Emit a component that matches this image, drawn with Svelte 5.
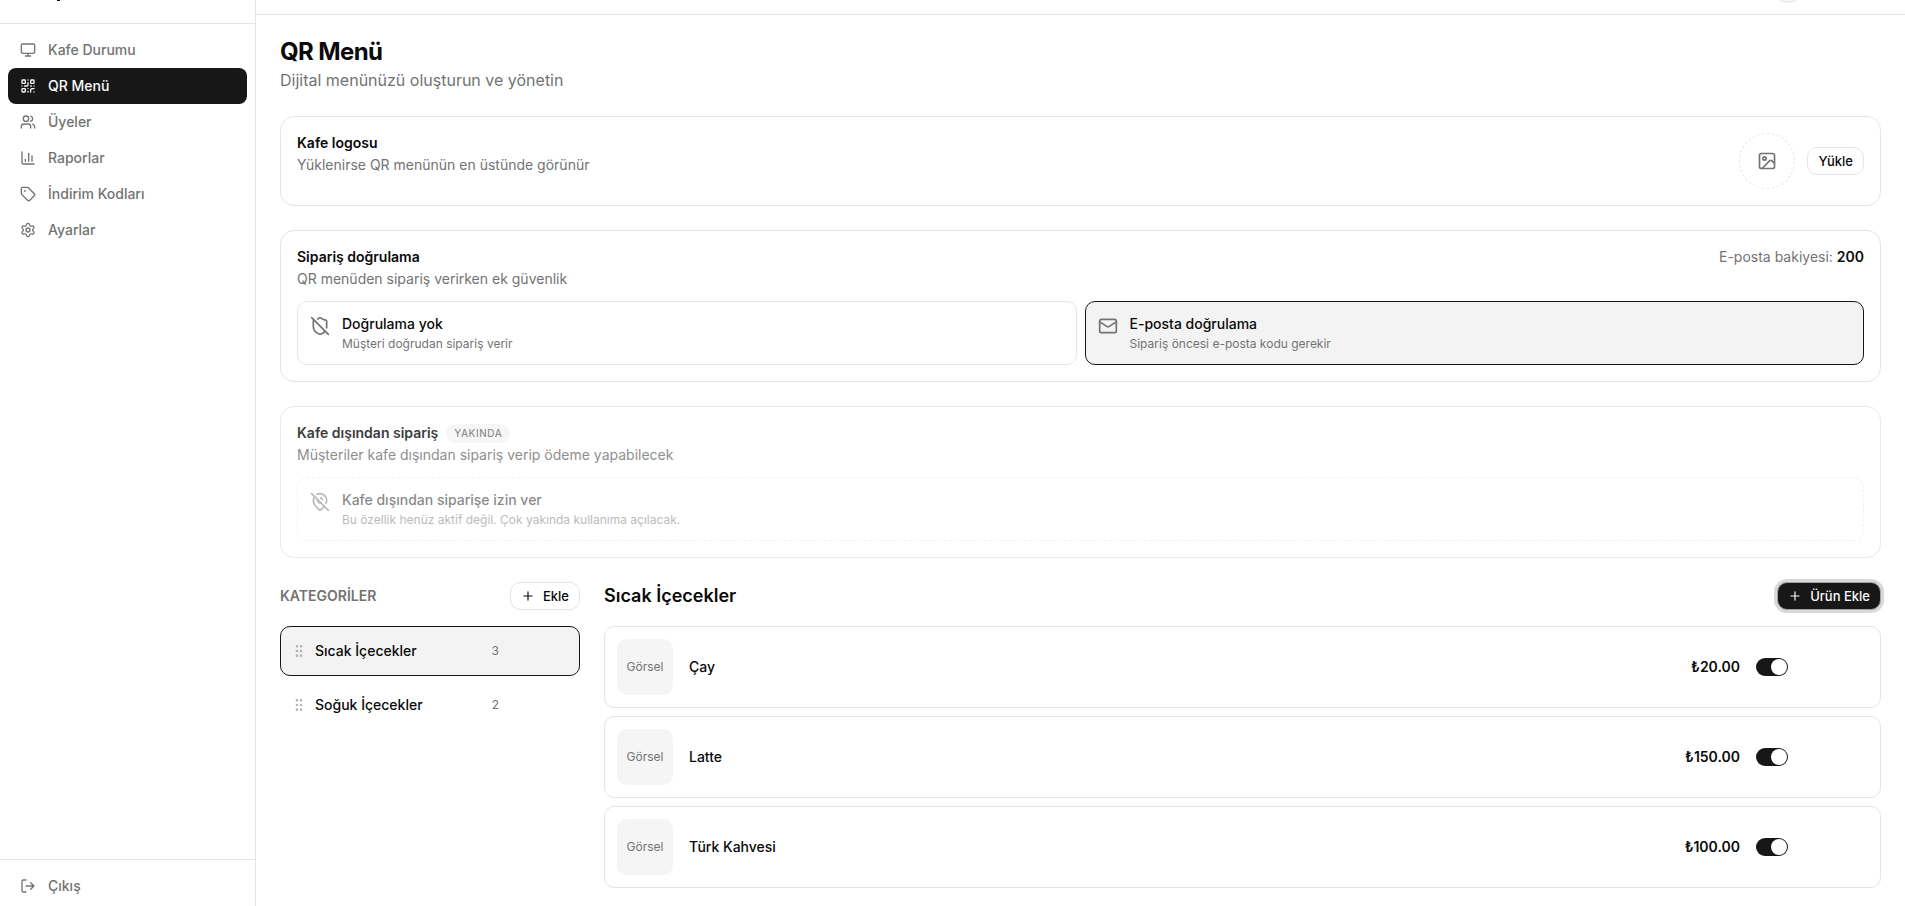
<script lang="ts">
	type Product = { name: string; price: string; active: boolean };
	type Category = { id: number; name: string; count: number };

	const nav = [
		{ label: "Kafe Durumu", icon: "monitor" },
		{ label: "QR Menü", icon: "qr" },
		{ label: "Üyeler", icon: "users" },
		{ label: "Raporlar", icon: "chart" },
		{ label: "İndirim Kodları", icon: "tag" },
		{ label: "Ayarlar", icon: "settings" },
	];

	const options = [
		{
			id: "none",
			icon: "shieldOff",
			title: "Doğrulama yok",
			text: "Müşteri doğrudan sipariş verir",
		},
		{
			id: "email",
			icon: "mail",
			title: "E-posta doğrulama",
			text: "Sipariş öncesi e-posta kodu gerekir",
		},
	];

	const categories: Category[] = [
		{ id: 1, name: "Sıcak İçecekler", count: 3 },
		{ id: 2, name: "Soğuk İçecekler", count: 2 },
	];

	let products: Product[] = $state([
		{ name: "Çay", price: "20.00", active: true },
		{ name: "Latte", price: "150.00", active: true },
		{ name: "Türk Kahvesi", price: "100.00", active: true },
	]);

	let activePage = $state("QR Menü");
	let verification = $state("email");
	let selectedId = $state(1);
	let selected = $derived(categories.find((c) => c.id === selectedId) ?? categories[0]);
</script>

{#snippet icon(name: string, size: number)}
	<svg
		width={size}
		height={size}
		viewBox="0 0 24 24"
		fill="none"
		stroke="currentColor"
		stroke-width="2"
		stroke-linecap="round"
		stroke-linejoin="round"
		aria-hidden="true"
	>
		{#if name === "monitor"}
			<rect width="20" height="14" x="2" y="3" rx="2" />
			<path d="M8 21h8M12 17v4" />
		{:else if name === "qr"}
			<rect width="5" height="5" x="3" y="3" rx="1" />
			<rect width="5" height="5" x="16" y="3" rx="1" />
			<rect width="5" height="5" x="3" y="16" rx="1" />
			<path d="M21 16h-3a2 2 0 0 0-2 2v3M21 21v.01M12 7v3a2 2 0 0 1-2 2H7M3 12h.01M12 3h.01M12 16v.01M16 12h1M21 12v.01M12 21v-1" />
		{:else if name === "users"}
			<path d="M16 21v-2a4 4 0 0 0-4-4H6a4 4 0 0 0-4 4v2" />
			<circle cx="9" cy="7" r="4" />
			<path d="M22 21v-2a4 4 0 0 0-3-3.87M16 3.13a4 4 0 0 1 0 7.75" />
		{:else if name === "chart"}
			<path d="M3 3v16a2 2 0 0 0 2 2h16M18 17V9M13 17V5M8 17v-3" />
		{:else if name === "tag"}
			<path d="M12.586 2.586A2 2 0 0 0 11.172 2H4a2 2 0 0 0-2 2v7.172a2 2 0 0 0 .586 1.414l8.704 8.704a2.426 2.426 0 0 0 3.42 0l6.58-6.58a2.426 2.426 0 0 0 0-3.42z" />
			<circle cx="7.5" cy="7.5" r=".5" fill="currentColor" />
		{:else if name === "settings"}
			<path d="M9.671 4.136a2.34 2.34 0 0 1 4.659 0 2.34 2.34 0 0 0 3.319 1.915 2.34 2.34 0 0 1 2.33 4.033 2.34 2.34 0 0 0 0 3.831 2.34 2.34 0 0 1-2.33 4.033 2.34 2.34 0 0 0-3.319 1.915 2.34 2.34 0 0 1-4.659 0 2.34 2.34 0 0 0-3.32-1.915 2.34 2.34 0 0 1-2.33-4.033 2.34 2.34 0 0 0 0-3.831A2.34 2.34 0 0 1 6.35 6.051a2.34 2.34 0 0 0 3.319-1.915" />
			<circle cx="12" cy="12" r="3" />
		{:else if name === "logout"}
			<path d="m16 17 5-5-5-5M21 12H9M9 21H5a2 2 0 0 1-2-2V5a2 2 0 0 1 2-2h4" />
		{:else if name === "image"}
			<rect width="18" height="18" x="3" y="3" rx="2" />
			<circle cx="9" cy="9" r="2" />
			<path d="m21 15-3.086-3.086a2 2 0 0 0-2.828 0L6 21" />
		{:else if name === "shieldOff"}
			<path d="m2 2 20 20" />
			<path d="M5 5a1 1 0 0 0-1 1v7c0 5 3.5 7.5 7.67 8.94a1 1 0 0 0 .67.01c2.35-.82 4.48-1.97 5.9-3.71" />
			<path d="M9.309 3.652A12.252 12.252 0 0 0 11.24 2.28a1.17 1.17 0 0 1 1.52 0C14.51 3.81 17 5 19 5a1 1 0 0 1 1 1v7a9.784 9.784 0 0 1-.08 1.264" />
		{:else if name === "mail"}
			<path d="m22 7-8.991 5.727a2 2 0 0 1-2.009 0L2 7" />
			<rect width="20" height="16" x="2" y="4" rx="2" />
		{:else if name === "pinOff"}
			<path d="M12.75 7.09a3 3 0 0 1 2.16 2.16" />
			<path d="M17.072 17.072c-1.634 2.17-3.527 3.912-4.471 4.727a1 1 0 0 1-1.202 0C9.539 20.193 4 14.993 4 10a8 8 0 0 1 1.432-4.568" />
			<path d="m2 2 20 20" />
			<path d="M8.475 2.818A8 8 0 0 1 20 10c0 1.183-.31 2.377-.81 3.533" />
			<path d="M9.13 9.13a3 3 0 0 0 3.74 3.74" />
		{:else if name === "plus"}
			<path d="M5 12h14M12 5v14" />
		{:else if name === "grip"}
			<circle cx="9" cy="12" r="1" />
			<circle cx="9" cy="5" r="1" />
			<circle cx="9" cy="19" r="1" />
			<circle cx="15" cy="12" r="1" />
			<circle cx="15" cy="5" r="1" />
			<circle cx="15" cy="19" r="1" />
		{/if}
	</svg>
{/snippet}

<div class="layout">
	<aside class="sidebar">
		<div class="brand"><span class="brand-mark"></span></div>
		<nav>
			{#each nav as item}
				<a
					href="#{item.icon}"
					class="nav-item"
					class:active={activePage === item.label}
					onclick={() => (activePage = item.label)}
				>
					{@render icon(item.icon, 16)}
					{item.label}
				</a>
			{/each}
		</nav>
		<div class="sidebar-footer">
			<button class="nav-item">
				{@render icon("logout", 16)}
				Çıkış
			</button>
		</div>
	</aside>

	<div class="content">
		<div class="topbar"><span class="avatar"></span></div>

		<main>
			<header>
				<h1>QR Menü</h1>
				<p>Dijital menünüzü oluşturun ve yönetin</p>
			</header>

			<section class="card row">
				<div class="heading">
					<h2>Kafe logosu</h2>
					<p>Yüklenirse QR menünün en üstünde görünür</p>
				</div>
				<div class="upload">
					<span class="logo-placeholder">{@render icon("image", 20)}</span>
					<button class="btn">Yükle</button>
				</div>
			</section>

			<section class="card">
				<div class="row">
					<div class="heading">
						<h2>Sipariş doğrulama</h2>
						<p>QR menüden sipariş verirken ek güvenlik</p>
					</div>
					<p class="balance">E-posta bakiyesi: <strong>200</strong></p>
				</div>
				<div class="options">
					{#each options as option}
						<button
							class="option"
							class:selected={verification === option.id}
							onclick={() => (verification = option.id)}
						>
							{@render icon(option.icon, 20)}
							<span class="option-text">
								<span class="option-title">{option.title}</span>
								<span class="option-note">{option.text}</span>
							</span>
						</button>
					{/each}
				</div>
			</section>

			<section class="card soon">
				<div class="heading">
					<h2>Kafe dışından sipariş <span class="badge">YAKINDA</span></h2>
					<p>Müşteriler kafe dışından sipariş verip ödeme yapabilecek</p>
				</div>
				<div class="options single">
					<button class="option dashed" disabled>
						{@render icon("pinOff", 20)}
						<span class="option-text">
							<span class="option-title">Kafe dışından siparişe izin ver</span>
							<span class="option-note">Bu özellik henüz aktif değil. Çok yakında kullanıma açılacak.</span>
						</span>
					</button>
				</div>
			</section>

			<div class="menu">
				<section class="categories">
					<div class="bar">
						<h3>KATEGORİLER</h3>
						<button class="btn">{@render icon("plus", 14)} Ekle</button>
					</div>
					<div class="category-list">
						{#each categories as category (category.id)}
							<button
								class="category"
								class:selected={category.id === selectedId}
								onclick={() => (selectedId = category.id)}
							>
								<span class="grip">{@render icon("grip", 16)}</span>
								<span class="category-name">{category.name}</span>
								<span class="count">{category.count}</span>
							</button>
						{/each}
					</div>
				</section>

				<section class="products">
					<div class="bar">
						<h2>{selected.name}</h2>
						<button class="btn primary">{@render icon("plus", 14)} Ürün Ekle</button>
					</div>
					<div class="product-list">
						{#each products as product}
							<div class="product">
								<span class="thumb">Görsel</span>
								<span class="product-name">{product.name}</span>
								<span class="price">₺{product.price}</span>
								<input
									type="checkbox"
									role="switch"
									class="switch"
									aria-label={product.name}
									bind:checked={product.active}
								/>
							</div>
						{/each}
					</div>
				</section>
			</div>
		</main>
	</div>
</div>

<style>
	:global(body) {
		background: #fff;
		color: #0a0a0a;
		font-family: Inter, sans-serif;
		font-size: 14px;
		line-height: 20px;
		overflow: hidden;
	}

	* {
		box-sizing: border-box;
	}

	h1,
	h2,
	h3,
	p {
		margin: 0;
	}

	button {
		font: inherit;
		color: inherit;
		cursor: pointer;
	}

	svg {
		flex-shrink: 0;
	}

	.layout {
		display: flex;
		height: 100vh;
	}

	.sidebar {
		display: flex;
		flex-direction: column;
		flex: 0 0 256px;
		border-right: 1px solid #e5e5e5;
	}

	.brand {
		display: flex;
		height: 24px;
		padding-left: 57px;
		border-bottom: 1px solid #e5e5e5;
	}

	.brand-mark {
		width: 3px;
		height: 1px;
		background: #0a0a0a;
	}

	nav {
		flex: 1;
		padding: 8px;
	}

	.nav-item {
		display: flex;
		align-items: center;
		gap: 12px;
		width: 100%;
		height: 36px;
		padding: 0 12px;
		border: 0;
		border-radius: 8px;
		background: none;
		color: #737373;
		font-weight: 500;
		text-decoration: none;
	}

	.nav-item.active {
		background: #171717;
		color: #fafafa;
	}

	.sidebar-footer {
		padding: 8px 8px 2px;
		border-top: 1px solid #e5e5e5;
	}

	.content {
		flex: 1;
		min-width: 0;
		overflow: hidden;
	}

	.topbar {
		display: flex;
		justify-content: flex-end;
		align-items: flex-end;
		height: 15px;
		padding: 0 101px 11px;
		border-bottom: 1px solid #e5e5e5;
		overflow: hidden;
	}

	.avatar {
		flex-shrink: 0;
		width: 32px;
		height: 32px;
		border: 1px solid #e5e5e5;
		border-radius: 50%;
		background: #f5f5f5;
	}

	main {
		display: flex;
		flex-direction: column;
		gap: 24px;
		padding: 21px 24px 24px;
	}

	h1 {
		font-size: 24px;
		line-height: 32px;
		font-weight: 700;
		letter-spacing: -0.025em;
	}

	header p {
		color: #737373;
		font-size: 16px;
		line-height: 24px;
	}

	.card {
		padding: 16px;
		border: 1px solid #e5e5e5;
		border-radius: 14px;
	}

	.row {
		display: flex;
		justify-content: space-between;
	}

	.heading {
		display: flex;
		flex-direction: column;
		gap: 2px;
	}

	.heading h2 {
		display: flex;
		align-items: center;
		gap: 8px;
		height: 20px;
		font-size: 14px;
		font-weight: 600;
	}

	.heading p,
	.balance {
		color: #737373;
	}

	.balance strong {
		color: #0a0a0a;
		font-weight: 600;
	}

	.upload {
		display: flex;
		align-items: center;
		gap: 12px;
	}

	.logo-placeholder {
		display: grid;
		place-items: center;
		width: 56px;
		height: 56px;
		border: 1px dashed #e5e5e5;
		border-radius: 50%;
		color: #737373;
	}

	.btn {
		display: inline-flex;
		align-items: center;
		justify-content: center;
		gap: 8px;
		height: 28px;
		padding: 0 10px;
		border: 1px solid #e5e5e5;
		border-radius: 10px;
		background: #fff;
		font-size: 13px;
		font-weight: 500;
		white-space: nowrap;
	}

	.btn.primary {
		border-color: #a1a1a1;
		background: #171717;
		color: #fafafa;
		box-shadow: 0 0 0 3px #d9d9d9;
	}

	.options {
		display: grid;
		grid-template-columns: 1fr 1fr;
		gap: 8px;
		margin-top: 12px;
	}

	.options.single {
		grid-template-columns: 1fr;
	}

	.option {
		display: flex;
		align-items: flex-start;
		gap: 12px;
		padding: 12px;
		border: 1px solid #e5e5e5;
		border-radius: 10px;
		background: none;
		text-align: left;
	}

	.option svg {
		margin-top: 2px;
		color: #737373;
	}

	.option.selected,
	.category.selected {
		border-color: #171717;
		background: #f3f3f3;
	}

	.option-text {
		display: flex;
		flex-direction: column;
		gap: 2px;
	}

	.option-title {
		font-weight: 500;
	}

	.option-note {
		color: #737373;
		font-size: 12px;
		line-height: 16px;
	}

	.soon {
		opacity: 0.8;
	}

	.option.dashed {
		border-style: dashed;
		cursor: not-allowed;
		opacity: 0.6;
	}

	.badge {
		padding: 2px 8px;
		border-radius: 10px;
		background: #f5f5f5;
		color: #737373;
		font-size: 10px;
		line-height: 15px;
		font-weight: 500;
		letter-spacing: 0.05em;
	}

	.menu {
		display: grid;
		grid-template-columns: 300px 1fr;
		gap: 24px;
	}

	.bar {
		display: flex;
		align-items: center;
		justify-content: space-between;
		height: 28px;
		margin-bottom: 16px;
	}

	.bar h2 {
		font-size: 18px;
		font-weight: 600;
	}

	.bar h3 {
		color: #737373;
		font-size: 14px;
		font-weight: 600;
	}

	.category-list,
	.product-list {
		display: flex;
		flex-direction: column;
		gap: 4px;
	}

	.product-list {
		gap: 8px;
	}

	.category {
		display: flex;
		align-items: center;
		gap: 8px;
		height: 50px;
		padding: 0 80px 0 10px;
		border: 1px solid transparent;
		border-radius: 10px;
		background: none;
		text-align: left;
	}

	.grip {
		display: flex;
		color: #b4b4b4;
	}

	.category-name {
		flex: 1;
		font-weight: 500;
	}

	.count {
		color: #737373;
		font-size: 12px;
	}

	.product {
		display: flex;
		align-items: center;
		gap: 16px;
		padding: 12px 92px 12px 12px;
		border: 1px solid #e5e5e5;
		border-radius: 10px;
	}

	.thumb {
		display: grid;
		place-items: center;
		width: 56px;
		height: 56px;
		border-radius: 10px;
		background: #f5f5f5;
		color: #737373;
		font-size: 12px;
	}

	.product-name {
		flex: 1;
		font-weight: 500;
	}

	.price {
		font-weight: 600;
	}

	.switch {
		display: flex;
		align-items: center;
		appearance: none;
		width: 32px;
		height: 18px;
		margin: 0;
		padding: 0 1px;
		border-radius: 9px;
		background: #e5e5e5;
		cursor: pointer;
	}

	.switch::before {
		content: "";
		width: 16px;
		height: 16px;
		border-radius: 50%;
		background: #fff;
	}

	.switch:checked {
		justify-content: flex-end;
		background: #171717;
	}
</style>
